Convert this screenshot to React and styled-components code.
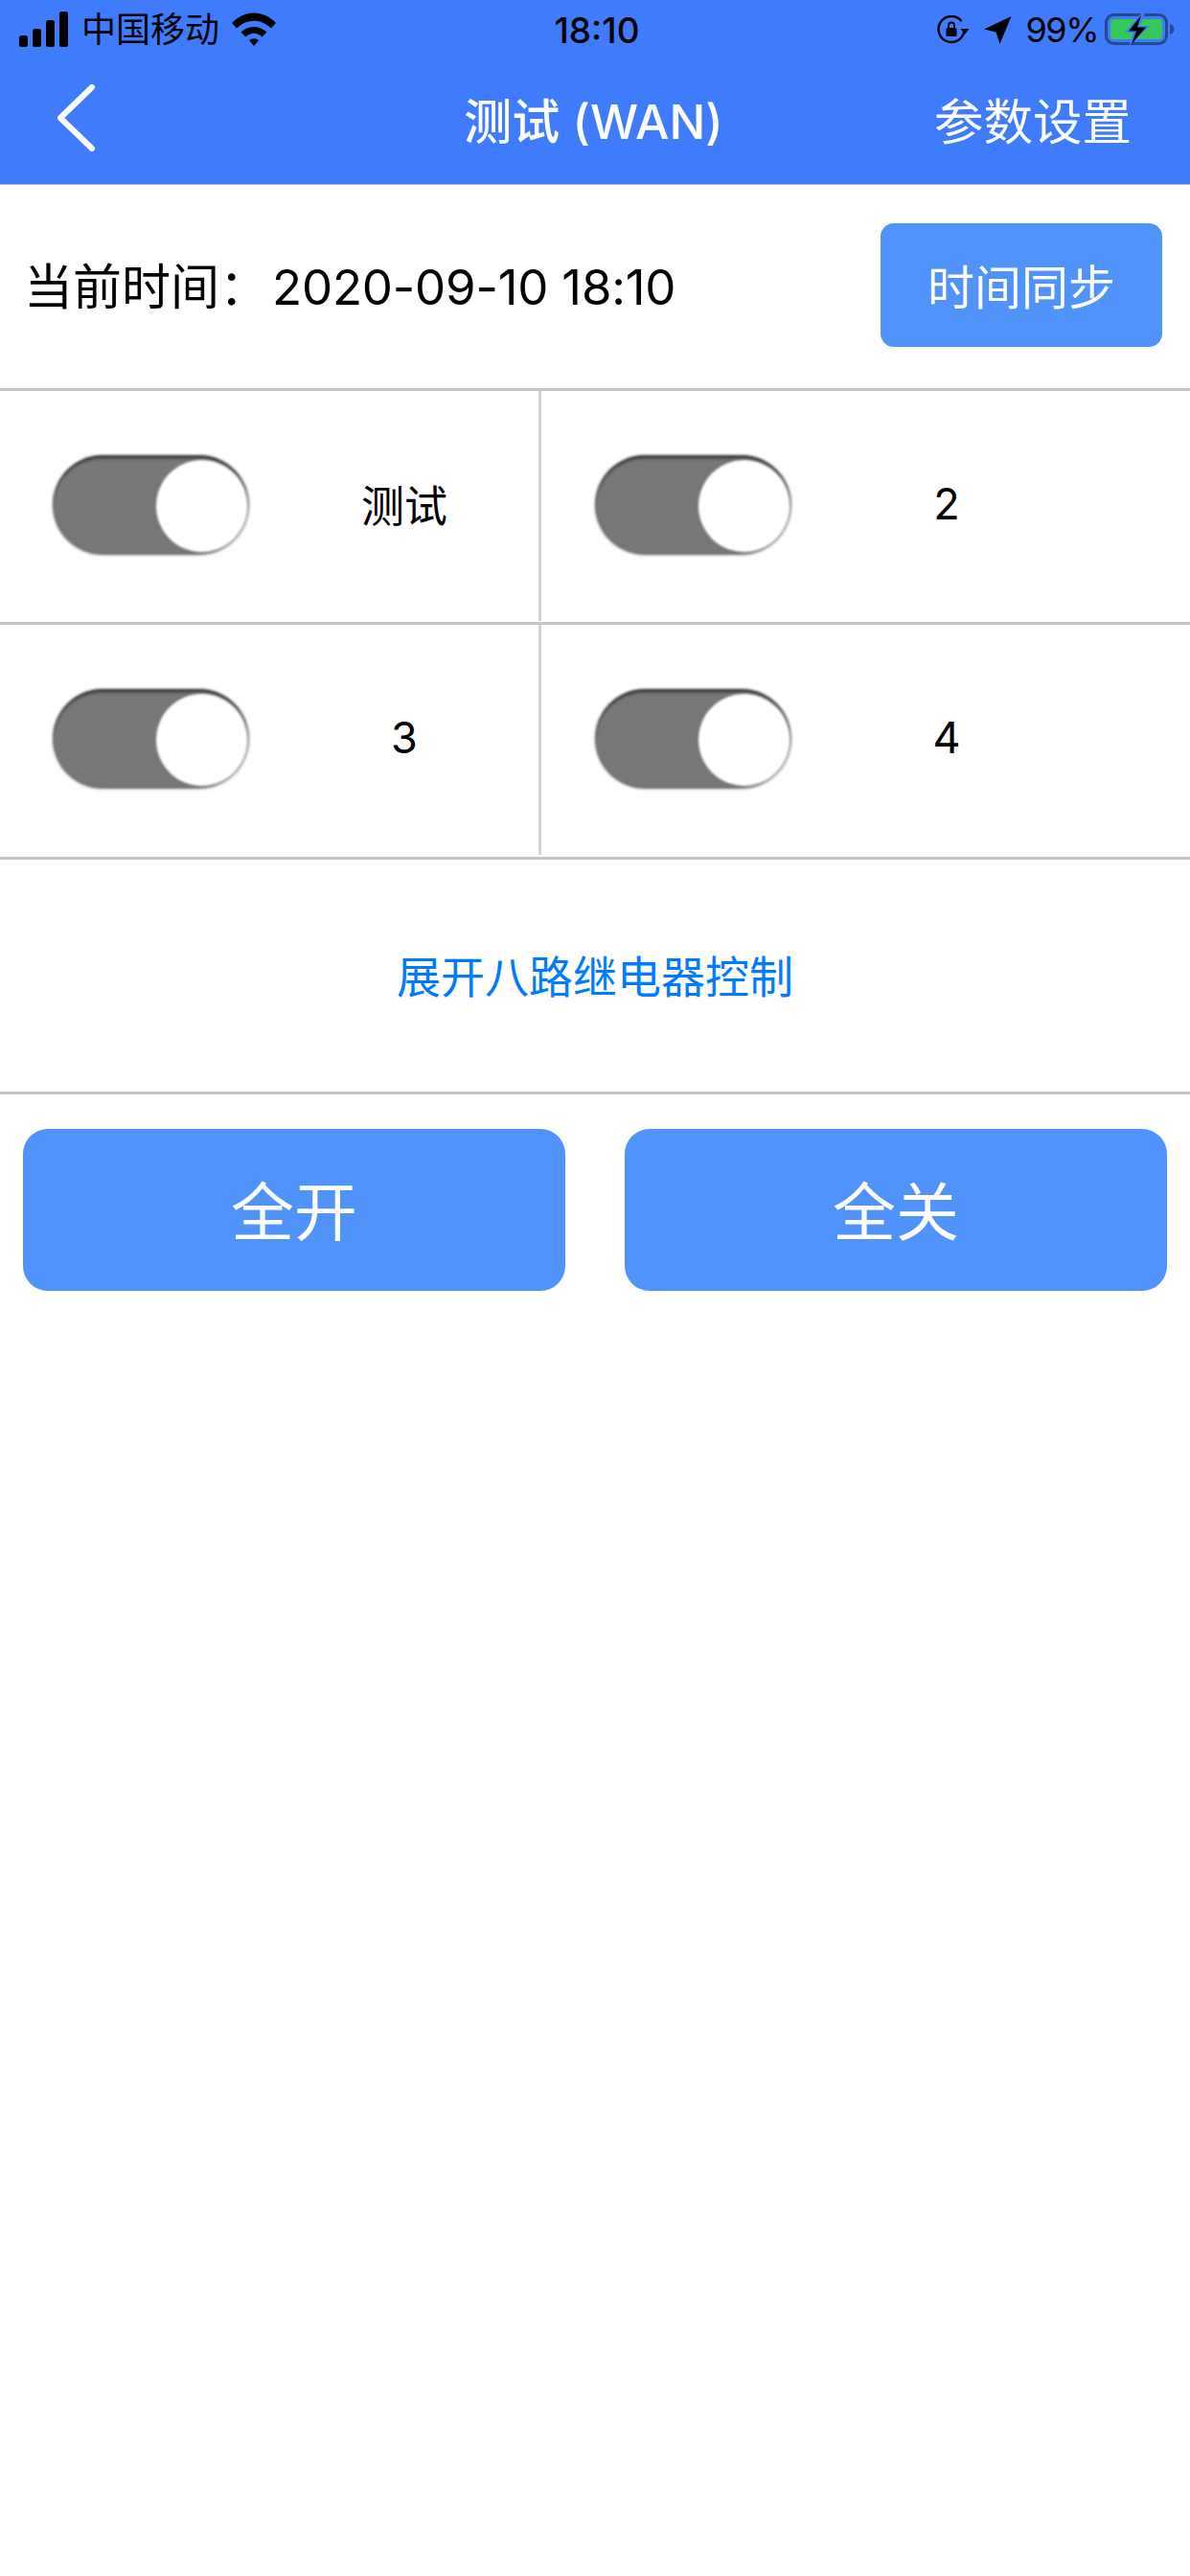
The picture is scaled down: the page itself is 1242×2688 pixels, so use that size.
import styled, { createGlobalStyle } from 'styled-components';

const GlobalStyle = createGlobalStyle`
  html, body {
    margin: 0;
    padding: 0;
    background: #fff;
  }
  * {
    box-sizing: border-box;
  }
`;

const FONT = `"Inter", "Noto Sans CJK SC", sans-serif`;

const Page = styled.div`
  width: 1242px;
  height: 2688px;
  background: #fff;
  font-family: ${FONT};
  color: #000;
  overflow: hidden;
`;

const Header = styled.header`
  height: 193px;
  background: #3f7bfd;
  border-bottom: 1px solid #b5b8c0;
`;

const StatusBar = styled.div`
  height: 60px;
  padding: 0 16px 0 20px;
  display: grid;
  grid-template-columns: 1fr auto 1fr;
  align-items: center;
`;

const StatusLeft = styled.div`
  display: flex;
  align-items: center;
  gap: 13px;
`;

const StatusRight = styled.div`
  display: flex;
  align-items: center;
  justify-content: flex-end;
  gap: 15px;
`;

const StatusText = styled.span`
  font-size: ${(p) => p.$size || 36}px;
  line-height: 60px;
  letter-spacing: ${(p) => p.$spacing || 0}px;
  font-weight: ${(p) => p.$weight || 400};
  margin-right: ${(p) => p.$after || 0}px;
  padding-top: ${(p) => p.$top || 0}px;
  white-space: nowrap;
`;

const NavBar = styled.div`
  height: 132px;
  display: grid;
  grid-template-columns: 1fr auto 1fr;
  align-items: center;
  padding: 0 61px 6px 58px;
`;

const BackButton = styled.div`
  display: flex;
  align-items: center;
`;

const NavTitle = styled.div`
  color: #fff;
  font-size: 50px;
  font-weight: 500;
  white-space: nowrap;
`;

const NavAction = styled.div`
  color: #fff;
  font-size: 51.5px;
  text-align: right;
  white-space: nowrap;
`;

const TimeRow = styled.div`
  height: 215px;
  padding: 0 29px 0 25px;
  display: flex;
  align-items: center;
  justify-content: space-between;
  border-bottom: 3px solid #c4c4c4;
`;

const TimeText = styled.div`
  font-size: 51px;
  padding-bottom: 6px;
  white-space: nowrap;
`;

const TimeValue = styled.span`
  margin-left: 4px;
  letter-spacing: -0.2px;
`;

const SyncButton = styled.div`
  width: 294px;
  height: 129px;
  margin-bottom: 3px;
  padding-bottom: 3px;
  border-radius: 14px;
  background: #5094fb;
  color: #fff;
  font-size: 49px;
  display: flex;
  align-items: center;
  justify-content: center;
`;

const GridRow = styled.div`
  height: ${(p) => p.$height}px;
  display: grid;
  grid-template-columns: 562px 1fr;
  border-bottom: 3px solid #c4c4c4;
`;

const Cell = styled.div`
  height: 240px;
  display: flex;
  align-items: center;
  padding-left: ${(p) => (p.$right ? 56 : 55)}px;
  border-left: ${(p) => (p.$right ? '3px solid #d2d2d2' : 'none')};
`;

const Toggle = styled.div`
  position: relative;
  width: 205px;
  height: 104px;
  margin-top: -2px;
  border-radius: 52px;
  background: linear-gradient(to right, #777 72%, #a8a8a8 100%);
  box-shadow: inset 0 4px 3px -1px #333, 0 0 3px rgba(0, 0, 0, 0.3);
  filter: blur(0.8px);
  flex: none;
`;

const Knob = styled.div`
  position: absolute;
  right: 2px;
  top: 5px;
  width: 95px;
  height: 96px;
  border-radius: 50%;
  background: #fff;
`;

const CellLabel = styled.div`
  font-size: 45px;
  width: 124px;
  margin-left: 100px;
  padding-bottom: 5px;
  flex: none;
  text-align: center;
  white-space: nowrap;
`;

const ExpandRow = styled.div`
  height: 245px;
  padding-bottom: 5px;
  display: flex;
  align-items: center;
  justify-content: center;
  color: #007aff;
  font-size: 46px;
  border-bottom: 3px solid #c4c4c4;
`;

const ButtonRow = styled.div`
  padding: 36px 24px 0;
  display: flex;
  justify-content: space-between;
`;

const BigButton = styled.div`
  width: 566px;
  height: 169px;
  padding-bottom: 5px;
  border-radius: 26px;
  background: #5094fb;
  color: #fff;
  font-size: 66px;
  display: flex;
  align-items: center;
  justify-content: center;
`;

function SignalIcon() {
  return (
    <svg width="52" height="38" viewBox="0 0 52 38">
      <rect x="0" y="25" width="9" height="12" rx="2.5" fill="#000" />
      <rect x="14" y="18" width="9" height="19" rx="2.5" fill="#000" />
      <rect x="28" y="9" width="9" height="28" rx="2.5" fill="#000" />
      <rect x="42" y="0" width="9" height="37" rx="2.5" fill="#000" />
    </svg>
  );
}

function WifiIcon() {
  return (
    <svg width="46" height="36" viewBox="0 0 46 36">
      <path d="M0 11 C13 -3 33 -3 46 11 L41 16.5 C30 6 16 6 5 16.5 Z" fill="#000" />
      <path d="M9.5 20.5 C17 13 29 13 36.5 20.5 L31.5 25.5 C26.5 20.5 19.5 20.5 14.5 25.5 Z" fill="#000" />
      <path d="M18 29 C21 26.5 25 26.5 28 29 L23 35 Z" fill="#000" />
    </svg>
  );
}

function RotationLockIcon() {
  return (
    <svg width="34" height="30" viewBox="0 0 34 30">
      <path d="M28 18 A13.5 13.5 0 1 1 25.5 6" fill="none" stroke="#000" strokeWidth="2.4" />
      <path d="M24.5 14 L33.5 14 L29 20 Z" fill="#000" />
      <rect x="9.5" y="13" width="11" height="9" rx="1.5" fill="#000" />
      <path d="M12 13 V10.5 A3 3 0 0 1 18 10.5 V13" fill="none" stroke="#000" strokeWidth="1.8" />
    </svg>
  );
}

function LocationIcon() {
  return (
    <svg width="29" height="29" viewBox="0 0 29 29">
      <path d="M28.5 0 L16.5 29 L12.5 16.5 L0 13.5 Z" fill="#000" />
    </svg>
  );
}

function BatteryIcon() {
  return (
    <svg width="73" height="34" viewBox="0 0 73 34">
      <rect x="1.5" y="1.5" width="63" height="30" rx="8" fill="none" stroke="#27488f" strokeWidth="3" />
      <rect x="6" y="6" width="54" height="21" rx="3" fill="#34c759" />
      <path d="M68 11 C71 12 72.5 14 72.5 16.5 C72.5 19 71 21 68 22 Z" fill="#27488f" />
      <path d="M38 0 L21 20 L30 20 L25 34 L47 13 L36 13 L42 0 Z" fill="#3f7bfd" />
      <path d="M38 2 L25 18.5 L33 18.5 L28 32 L43 14.5 L34 14.5 Z" fill="#000" />
    </svg>
  );
}

function BackIcon() {
  return (
    <svg width="42" height="72" viewBox="0 0 42 72">
      <path d="M38 4 L5 36 L38 68" fill="none" stroke="#fff" strokeWidth="6" strokeLinecap="round" strokeLinejoin="round" />
    </svg>
  );
}

const ROWS = [
  { height: 244, items: ['测试', '2'] },
  { height: 245, items: ['3', '4'] },
];

function App() {
  return (
    <Page>
      <GlobalStyle />
      <Header>
        <StatusBar>
          <StatusLeft>
            <SignalIcon />
            <StatusText>中国移动</StatusText>
            <WifiIcon />
          </StatusLeft>
          <StatusText $weight={500} $size={37} $top={2}>18:10</StatusText>
          <StatusRight>
            <RotationLockIcon />
            <LocationIcon />
            <StatusText $spacing={-1.5} $after={-8}>99%</StatusText>
            <BatteryIcon />
          </StatusRight>
        </StatusBar>
        <NavBar>
          <BackButton>
            <BackIcon />
          </BackButton>
          <NavTitle>测试 (WAN)</NavTitle>
          <NavAction>参数设置</NavAction>
        </NavBar>
      </Header>
      <TimeRow>
        <TimeText>
          当前时间：<TimeValue>2020-09-10 18:10</TimeValue>
        </TimeText>
        <SyncButton>时间同步</SyncButton>
      </TimeRow>
      {ROWS.map((row) => (
        <GridRow key={row.items[0]} $height={row.height}>
          {row.items.map((label, i) => (
            <Cell key={label} $right={i === 1}>
              <Toggle>
                <Knob />
              </Toggle>
              <CellLabel>{label}</CellLabel>
            </Cell>
          ))}
        </GridRow>
      ))}
      <ExpandRow>展开八路继电器控制</ExpandRow>
      <ButtonRow>
        <BigButton>全开</BigButton>
        <BigButton>全关</BigButton>
      </ButtonRow>
    </Page>
  );
}

export default App;
